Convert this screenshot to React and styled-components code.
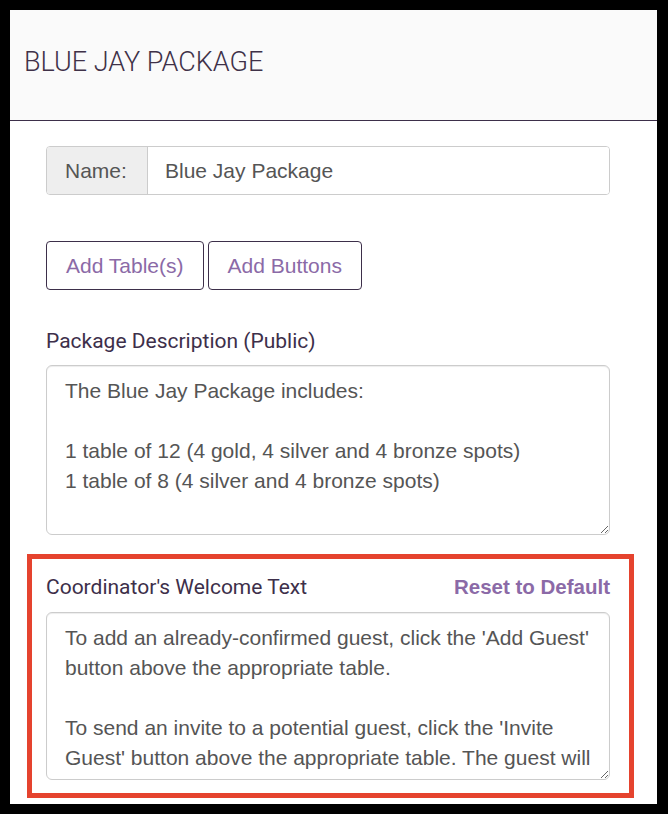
import React from "react";
import styled, { createGlobalStyle } from "styled-components";

const GlobalStyle = createGlobalStyle`
  html, body {
    margin: 0;
    padding: 0;
    background: #000;
  }
  * { box-sizing: border-box; }
`;

const Frame = styled.div`
  width: 668px;
  height: 814px;
  padding: 10px 11px 10px 10px;
  background: #000;
`;

const Panel = styled.div`
  width: 647px;
  height: 794px;
  background: #fff;
  overflow: hidden;
  display: flex;
  flex-direction: column;
`;

const Header = styled.div`
  height: 111px;
  background: #fafafa;
  border-bottom: 1px solid #3d2f4a;
  display: flex;
  align-items: center;
  padding: 0 14px 6px;
`;

const Title = styled.h1`
  margin: 0;
  font-family: Roboto, "Liberation Sans", sans-serif;
  font-weight: 300;
  font-size: 27px;
  color: #3f3148;
`;

const Body = styled.div`
  padding: 25px 47px 0 36px;
  display: flex;
  flex-direction: column;
`;

const InputGroup = styled.div`
  display: flex;
  height: 49px;
  border: 1px solid #ccc;
  border-radius: 4px;
  overflow: hidden;
`;

const Addon = styled.div`
  width: 101px;
  background: #eee;
  border-right: 1px solid #ccc;
  display: flex;
  align-items: center;
  padding-left: 18px;
  font-family: "Liberation Sans", Arial, sans-serif;
  font-size: 21px;
  color: #555;
`;

const TextInput = styled.input`
  flex: 1;
  border: none;
  outline: none;
  padding: 0 0 0 17px;
  font-family: "Liberation Sans", Arial, sans-serif;
  font-size: 21px;
  color: #555;
  background: #fff;
`;

const ButtonRow = styled.div`
  display: flex;
  gap: 4px;
  margin-top: 46px;
`;

const OutlineButton = styled.button`
  height: 49px;
  padding: 0 19px;
  background: #fff;
  border: 1px solid #3d2f4a;
  border-radius: 4px;
  font-family: "Liberation Sans", Arial, sans-serif;
  font-size: 21px;
  color: #8b6aa7;
  cursor: pointer;
`;

const Label = styled.div`
  font-family: Roboto, "Liberation Sans", sans-serif;
  font-size: 21px;
  color: #3d2f4a;
  line-height: 22px;
`;

const LabelRow = styled.div`
  display: flex;
  justify-content: space-between;
  align-items: center;
  margin-bottom: ${(p) => p.$gap || 13}px;
`;

const ResetLink = styled.a`
  font-family: "Liberation Sans", Arial, sans-serif;
  font-weight: bold;
  font-size: 20.5px;
  line-height: 22px;
  color: #8b6aa7;
  text-decoration: none;
  cursor: pointer;
`;

const Field = styled.div`
  margin-top: ${(p) => p.$top}px;
`;

const TextArea = styled.textarea`
  display: block;
  width: 100%;
  height: ${(p) => p.$height}px;
  padding: 10px 8px 0 18px;
  border: 1px solid #ccc;
  border-radius: 6px;
  box-shadow: inset 0 1px 1px rgba(0, 0, 0, 0.075);
  font-family: "Liberation Sans", Arial, sans-serif;
  font-size: 21px;
  line-height: 30px;
  color: #555;
  resize: vertical;
  outline: none;
  overflow: hidden;
`;

const Highlight = styled.div`
  margin: 19px -24px 0 -19px;
  border: 5px solid #e5432e;
  padding: 17px 19px 13px 14px;
`;

const description = `The Blue Jay Package includes:

1 table of 12 (4 gold, 4 silver and 4 bronze spots)
1 table of 8 (4 silver and 4 bronze spots)`;

const welcome = `To add an already-confirmed guest, click the 'Add Guest' button above the appropriate table.

To send an invite to a potential guest, click the 'Invite Guest' button above the appropriate table. The guest will receive an invite email from you containing a request to join your table.`;

export default function App() {
  return (
    <>
      <GlobalStyle />
      <Frame>
        <Panel>
          <Header>
            <Title>BLUE JAY PACKAGE</Title>
          </Header>
          <Body>
            <InputGroup>
              <Addon>Name:</Addon>
              <TextInput defaultValue="Blue Jay Package" />
            </InputGroup>

            <ButtonRow>
              <OutlineButton>Add Table(s)</OutlineButton>
              <OutlineButton>Add Buttons</OutlineButton>
            </ButtonRow>

            <Field $top={40}>
              <LabelRow>
                <Label>Package Description (Public)</Label>
              </LabelRow>
              <TextArea $height={170} defaultValue={description} />
            </Field>

            <Highlight>
              <LabelRow $gap={14}>
                <Label>Coordinator's Welcome Text</Label>
                <ResetLink>Reset to Default</ResetLink>
              </LabelRow>
              <TextArea $height={168} defaultValue={welcome} />
            </Highlight>
          </Body>
        </Panel>
      </Frame>
    </>
  );
}
